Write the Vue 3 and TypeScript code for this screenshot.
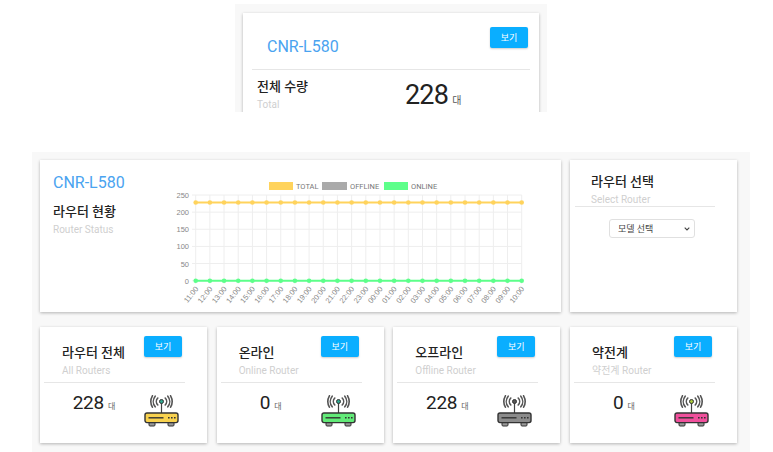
<script setup lang="ts">
interface StatCard {
  title: string;
  sub: string;
  value: number;
  body: string;
  dot: string;
}

const statCards: StatCard[] = [
  { title: "라우터 전체", sub: "All Routers", value: 228, body: "#f8d24f", dot: "#2fa58e" },
  { title: "온라인", sub: "Online Router", value: 0, body: "#62ea78", dot: "#2fa58e" },
  { title: "오프라인", sub: "Offline Router", value: 228, body: "#8b8b8b", dot: "#555" },
  { title: "약전계", sub: "약전계 Router", value: 0, body: "#f0509c", dot: "#a8c83c" },
];

const hours = [
  "11:00", "12:00", "13:00", "14:00", "15:00", "16:00", "17:00", "18:00",
  "19:00", "20:00", "21:00", "22:00", "23:00", "00:00", "01:00", "02:00",
  "03:00", "04:00", "05:00", "06:00", "07:00", "08:00", "09:00", "10:00",
];
const yTicks = [250, 200, 150, 100, 50, 0];

const legend = [
  { label: "TOTAL", x: 269, w: 24, color: "#ffd35c" },
  { label: "OFFLINE", x: 322, w: 25, color: "#aaaaaa" },
  { label: "ONLINE", x: 384, w: 24, color: "#5dff8a" },
];

const plotLeft = 195.7;
const plotRight = 521.7;
const plotTop = 195;
const plotBottom = 280.7;

function xAt(i: number): number {
  return plotLeft + (i * (plotRight - plotLeft)) / (hours.length - 1);
}

function yAt(v: number): number {
  return plotBottom - (v / 250) * (plotBottom - plotTop);
}

function linePoints(v: number): string {
  return hours.map((_, i) => `${xAt(i)},${yAt(v)}`).join(" ");
}
</script>

<template>
  <div class="page">
    <section class="top-panel">
      <div class="card summary">
        <div class="summary-head">
          <span class="model">CNR-L580</span>
          <button class="btn-view summary-btn">보기</button>
        </div>
        <div class="summary-body">
          <div class="summary-title">
            <div class="title">전체 수량</div>
            <div class="sub">Total</div>
          </div>
          <div class="summary-value">228<span class="unit">대</span></div>
        </div>
      </div>
    </section>

    <section class="panel">
      <div class="top-row">
        <div class="card status">
          <div class="status-info">
            <div class="model">CNR-L580</div>
            <div class="title status-title">라우터 현황</div>
            <div class="sub">Router Status</div>
          </div>
          <svg class="chart" viewBox="170 175 370 135" width="370" height="135">
            <g v-for="l in legend" :key="l.label">
              <rect :x="l.x" y="182" :width="l.w" height="8" :fill="l.color" />
              <text :x="l.x + l.w + 3" y="188.5" class="legend-text">{{ l.label }}</text>
            </g>
            <line
              v-for="t in yTicks"
              :key="t"
              x1="192"
              :x2="plotRight"
              :y1="yAt(t)"
              :y2="yAt(t)"
              class="grid-line"
            />
            <line
              v-for="(h, i) in hours"
              :key="h"
              :x1="xAt(i)"
              :x2="xAt(i)"
              :y1="plotTop"
              :y2="plotBottom + 3"
              class="grid-line"
            />
            <text v-for="t in yTicks" :key="t" x="189" :y="yAt(t) + 3" class="axis-text" text-anchor="end">{{ t }}</text>
            <text
              v-for="(h, i) in hours"
              :key="h"
              class="axis-text"
              text-anchor="end"
              :transform="`translate(${xAt(i) + 3} 289) rotate(-52)`"
            >{{ h }}</text>
            <polyline :points="linePoints(228)" class="series" stroke="#ffd35c" />
            <polyline :points="linePoints(0)" class="series" stroke="#5dff8a" />
            <circle v-for="(h, i) in hours" :key="h" :cx="xAt(i)" :cy="yAt(228)" r="2.3" fill="#ffd35c" />
            <circle v-for="(h, i) in hours" :key="h" :cx="xAt(i)" :cy="yAt(0)" r="2.3" fill="#5dff8a" />
          </svg>
        </div>

        <div class="card select-card">
          <div class="select-head">
            <div class="title">라우터 선택</div>
            <div class="sub">Select Router</div>
          </div>
          <div class="select-wrap">
            <div class="select-box">
              <select class="model-select">
                <option>모델 선택</option>
              </select>
              <svg class="chevron" viewBox="0 0 6 4" width="6" height="4">
                <path d="M.7.7 3 3l2.3-2.3" fill="none" stroke="#444" stroke-width="1.1" />
              </svg>
            </div>
          </div>
        </div>
      </div>

      <div class="stat-row">
        <div v-for="c in statCards" :key="c.title" class="card stat">
          <div class="stat-head">
            <div>
              <div class="title">{{ c.title }}</div>
              <div class="sub">{{ c.sub }}</div>
            </div>
            <button class="btn-view">보기</button>
          </div>
          <div class="stat-body">
            <div class="stat-value">{{ c.value }}<span class="unit">대</span></div>
            <svg class="router" viewBox="0 0 35 32" width="35" height="32">
              <g fill="none" stroke="#555" stroke-width="1.6" stroke-linecap="round">
                <path d="M13.8 3a5 5 0 0 0 0 7" />
                <path d="M11.2 1.2a8.4 8.4 0 0 0 0 10.6" />
                <path d="M8.4.8a11.6 11.6 0 0 0 0 11.4" />
                <path d="M21.2 3a5 5 0 0 1 0 7" />
                <path d="M23.8 1.2a8.4 8.4 0 0 1 0 10.6" />
                <path d="M26.6.8a11.6 11.6 0 0 1 0 11.4" />
              </g>
              <path d="M17.5 7v11" stroke="#444" stroke-width="1.2" />
              <circle cx="17.5" cy="6.5" r="2" :fill="c.dot" stroke="#333" stroke-width="1" />
              <path d="M5 27h6v3a1 1 0 0 1-1 1H6a1 1 0 0 1-1-1zM24 27h6v3a1 1 0 0 1-1 1h-4a1 1 0 0 1-1-1z" fill="#999" stroke="#333" stroke-width="1" />
              <rect x="1" y="18" width="33" height="9.6" rx="2" :fill="c.body" stroke="#333" stroke-width="1.4" />
              <path d="M4.5 22.8h15" stroke="#333" stroke-width="1.4" />
              <path d="M24 22.8h1.6M27 22.8h1.6M30 22.8h1.6" stroke="#333" stroke-width="1.4" />
            </svg>
          </div>
        </div>
      </div>
    </section>
  </div>
</template>

<style scoped>
.page {
  width: 773px;
  height: 452px;
  overflow: hidden;
  font-family: Roboto, "Noto Sans CJK KR", sans-serif;
  color: #222;
}

.top-panel {
  box-sizing: border-box;
  width: 312px;
  height: 108px;
  margin: 4px 0 0 235px;
  padding: 9px 8px 0;
  background: #f8f8f8;
  overflow: hidden;
}

.panel {
  box-sizing: border-box;
  width: 718px;
  height: 300px;
  margin: 40px 0 0 32px;
  padding: 8px 13px 0 8px;
  background: #f8f8f8;
}

.card {
  background: #fff;
  box-shadow: 0 1px 3px rgba(0, 0, 0, 0.28);
}

.summary {
  height: 130px;
  padding: 0 9px;
}

.summary-head {
  display: flex;
  justify-content: space-between;
  height: 57px;
  padding: 14px 2px 0 15px;
  box-sizing: border-box;
  border-bottom: 1px solid #e6e6e6;
}

.summary-head .model {
  margin-top: 9px;
}

.summary-btn {
  width: 38px;
  height: 23px;
}

.summary-body {
  display: flex;
  padding: 7px 0 0 5px;
}

.summary-title {
  width: 148px;
}

.summary-value {
  font-size: 27px;
  line-height: 36px;
  letter-spacing: -0.8px;
}

.summary-value .unit {
  font-size: 10px;
  margin-left: 4px;
  letter-spacing: 0;
  color: #555;
}

.model {
  font-size: 16px;
  line-height: 22px;
  color: #4aa3f0;
}

.title {
  font-size: 13px;
  line-height: 20px;
  font-weight: 500;
  color: #222;
}

.sub {
  font-size: 10px;
  line-height: 15px;
  color: #cfcfcf;
}

.btn-view {
  width: 38px;
  height: 21px;
  padding: 0;
  border: none;
  border-radius: 2px;
  background: #0aaeff;
  color: #fff;
  font-family: inherit;
  font-size: 9px;
  box-shadow: 0 1px 2px rgba(0, 0, 0, 0.2);
}

.top-row {
  display: grid;
  grid-template-columns: 521px 167px;
  gap: 9px;
  height: 152px;
}

.status {
  display: flex;
}

.status-info {
  box-sizing: border-box;
  width: 130px;
  padding: 12px 0 0 13px;
}

.status-title {
  margin-top: 8px;
}

.chart {
  display: block;
  margin-top: 15px;
}

.legend-text {
  font-size: 7.5px;
  fill: #777;
  font-family: Roboto, sans-serif;
}

.axis-text {
  font-size: 7.5px;
  fill: #888;
  font-family: "Liberation Sans", sans-serif;
}

.grid-line {
  stroke: #eeeeee;
  stroke-width: 1;
}

.series {
  fill: none;
  stroke-width: 2;
}

.select-card {
  padding: 0 22px 0 5px;
}

.select-head {
  padding: 12px 0 0 16px;
  height: 47px;
  box-sizing: border-box;
  border-bottom: 1px solid #e6e6e6;
}

.select-wrap {
  display: flex;
  justify-content: center;
  padding-top: 12px;
  padding-left: 14px;
}

.select-box {
  position: relative;
  width: 86px;
  height: 19px;
}

.model-select {
  appearance: none;
  display: block;
  box-sizing: border-box;
  width: 86px;
  height: 19px;
  padding: 0 0 0 8px;
  border: 1px solid #e0e0e0;
  border-radius: 3px;
  background: #fff;
  color: #444;
  font-family: inherit;
  font-size: 9px;
}

.chevron {
  position: absolute;
  top: 8px;
  right: 5px;
}

.stat-row {
  display: grid;
  grid-template-columns: repeat(4, 167px);
  gap: 9.67px;
  margin-top: 15px;
}

.stat {
  box-sizing: border-box;
  height: 116px;
  padding: 0 22px 0 4px;
}

.stat-head {
  display: flex;
  justify-content: space-between;
  height: 56px;
  box-sizing: border-box;
  padding: 9px 0 0 18px;
  border-bottom: 1px solid #e6e6e6;
}

.stat-head > div {
  padding-top: 7px;
}

.stat-head .btn-view {
  margin-right: 3px;
}

.stat-body {
  display: flex;
  align-items: flex-start;
  padding-top: 12px;
}

.stat-value {
  width: 100px;
  margin-top: -2px;
  text-align: center;
  font-size: 19px;
  line-height: 20px;
  letter-spacing: -0.3px;
}

.stat-value .unit {
  font-size: 8px;
  margin-left: 4px;
  letter-spacing: 0;
  color: #666;
}

.router {
  display: block;
  flex: none;
}
</style>

<style>
html,
body {
  background: #fff;
  overflow: hidden;
}
</style>
